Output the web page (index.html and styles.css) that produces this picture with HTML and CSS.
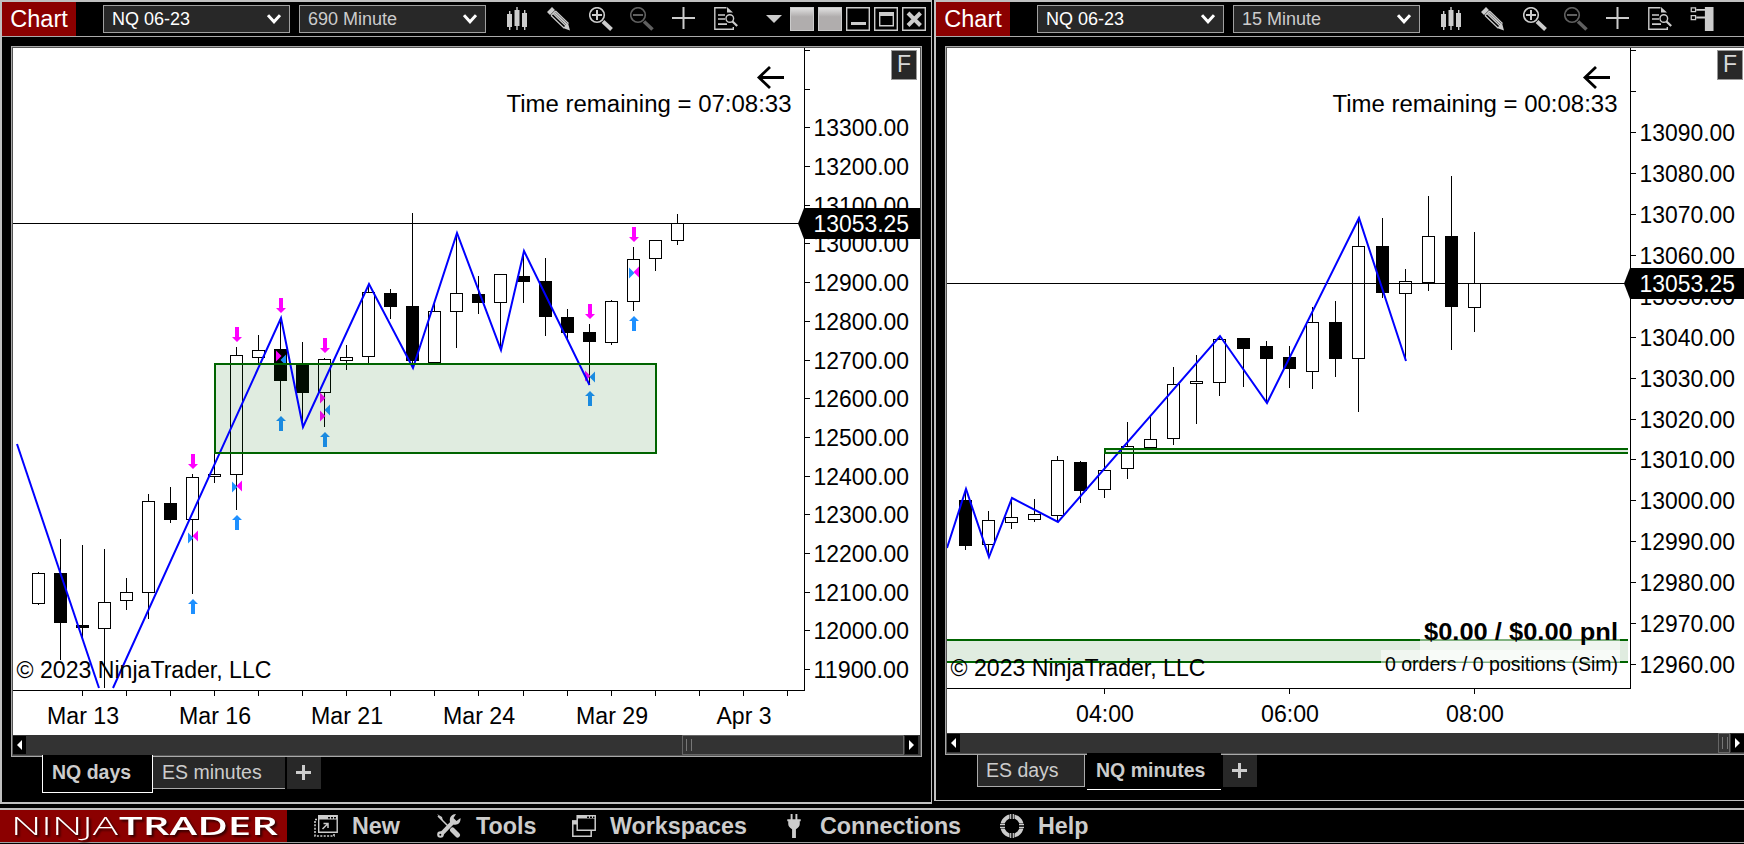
FILE: index.html
```html
<!DOCTYPE html>
<html lang="en">
<head>
  <meta charset="UTF-8" />
  <title>NinjaTrader</title>
  <link rel="stylesheet" href="styles.css">
</head>
<body>

<!-- icon sprite -->
<svg class="sprite">
  <symbol id="i-bars" viewBox="0 0 24 24">
    <path fill="currentColor" d="M2 7h5v13H2zM9.500 3h5v16h-5zM17 6h5v14h-5zM4 4h1.400v19H4zM11.300 0h1.400v23h-1.400zM19 3h1.400v20H19z"/>
  </symbol>
  <symbol id="i-pencil" viewBox="0 0 24 24">
    <path fill="currentColor" d="M0 5l5-5 3 3-5 5zM23 23.500l-7-2.500 5-5z"/>
    <path fill="none" stroke="currentColor" stroke-width="1.200" d="M4 8.500l13 12.500M6 6.500l13 12.500M8.500 4l13 12.500M4 8.500L8.500 4"/>
    <path stroke="currentColor" stroke-width="1.800" d="M7.300 5.300l13 12.500"/>
  </symbol>
  <symbol id="i-zoom-in" viewBox="0 0 24 24">
    <circle cx="8" cy="8" r="7.300" fill="none" stroke="currentColor" stroke-width="1.600"/>
    <path stroke="currentColor" stroke-width="2" d="M3 8h10M8 3v10"/>
    <path stroke="currentColor" stroke-width="4" d="M14 14.500l8.500 8"/>
  </symbol>
  <symbol id="i-zoom-out" viewBox="0 0 24 24">
    <circle cx="8" cy="8" r="7.300" fill="none" stroke="currentColor" stroke-width="1.600"/>
    <path stroke="currentColor" stroke-width="2" d="M3 8h10"/>
    <path stroke="currentColor" stroke-width="3.600" d="M14 14.500l8.500 8"/>
  </symbol>
  <symbol id="i-cross" viewBox="0 0 24 24">
    <path fill="currentColor" d="M0 10h23v2H0zM10.500 -1h2v23h-2z"/>
  </symbol>
  <symbol id="i-doc" viewBox="0 0 24 24">
    <path fill="none" stroke="currentColor" stroke-width="1.400" d="M12.500 .7H.8v21.600h18.500V20"/>
    <path fill="currentColor" d="M13 0l6 5.500h-6zM4 7.200h7v1.600H4zM4 11.200h7v1.600H4zM4 16.200h9v1.700H4z"/>
    <circle cx="15.800" cy="11.500" r="3.800" fill="none" stroke="currentColor" stroke-width="1.400"/>
    <path stroke="currentColor" stroke-width="2.200" d="M18.500 14.500l4.700 4.500"/>
  </symbol>
  <symbol id="i-props" viewBox="0 0 24 25">
    <path fill="currentColor" d="M15 0h9v25h-9zM6 2h9v2H6zM6 10h9v2H6z"/>
    <path fill="none" stroke="currentColor" stroke-width="1.300" d="M.8 .8h4.500v4H.8zM.8 9h4.500v4.200H.8z"/>
  </symbol>
  <symbol id="i-chevron" viewBox="0 0 14 10">
    <path fill="none" stroke="#fff" stroke-width="3" d="M1 1.200l6 6.600 6-6.600"/>
  </symbol>
  <symbol id="i-new" viewBox="0 0 24 22">
    <path fill="none" stroke="currentColor" stroke-width="1.400" d="M4.700 .7h18.500v16.600H4.700z"/>
    <path fill="currentColor" d="M5 1h18v3.500H5z"/>
    <path fill="#000" d="M14 2h2v1.500h-2zM17 2h2v1.500h-2zM20 2h2v1.500h-2z"/>
    <path fill="none" stroke="currentColor" stroke-width="1.500" d="M8.500 14l5-5M9.500 8.500h4.500v4.500"/>
    <path fill="none" stroke="currentColor" stroke-width="1.600" stroke-dasharray="2 1.400" d="M3 4.500H1v16.500h19v-3"/>
  </symbol>
  <symbol id="i-tools" viewBox="0 0 24 24">
    <path stroke="currentColor" stroke-width="1.500" d="M1 2l10 10"/>
    <path stroke="currentColor" stroke-width="5" stroke-linecap="round" d="M15.500 16l5 5"/>
    <path stroke="currentColor" stroke-width="4" d="M3 21.500L17 7"/>
    <path fill="currentColor" d="M0 0l5 3 1 4zM13 8c-1-5 2-8 6-8l-2.500 4 3 3L23.500 4c.5 5-3 7.500-7 6.500z"/>
    <circle cx="3.500" cy="20.500" r="3.300" fill="currentColor"/>
    <circle cx="3.300" cy="20.700" r="1" fill="#000"/>
  </symbol>
  <symbol id="i-windows" viewBox="0 0 24 22">
    <path fill="none" stroke="currentColor" stroke-width="1.500" d="M5.200 .8h18v14.500h-18zM4.500 6H.8v15.200h18.400V16"/>
    <path fill="currentColor" d="M5 .5h18.500v3H5zM0 5.500h5v4H0z"/>
    <path fill="#000" d="M15 1.500h2V3h-2zM18 1.500h2V3h-2zM21 1.500h1.500V3H21z"/>
  </symbol>
  <symbol id="i-plug" viewBox="0 0 16 25">
    <path fill="currentColor" d="M4.500 0h2v6h-2zM9.500 0h2v6h-2zM1 5.500h14v2H1zM2 7.500h12v3q0 3-4 5.500v9H6v-9q-4-2.500-4-5.500z"/>
  </symbol>
  <symbol id="i-help" viewBox="0 0 24 24">
    <circle cx="12" cy="12" r="9.700" fill="none" stroke="currentColor" stroke-width="4"/>
    <path stroke="#000" stroke-width="5" d="M12 0v5M12 19v5M0 12h5M19 12h5"/>
    <path stroke="currentColor" stroke-width="1.200" d="M10.700 0v5M13.300 0v5M10.700 19v5M13.300 19v5M0 10.700h5M0 13.300h5M19 10.700h5M19 13.300h5"/>
  </symbol>
</svg>

<div class="windows">
  <section class="window">
    <header class="title-bar">
      <span class="title">Chart</span>
      <button class="combo instrument">NQ 06-23<svg><use href="#i-chevron"/></svg></button>
      <button class="combo interval">690 Minute<svg><use href="#i-chevron"/></svg></button>
      <div class="tools">
        <svg><use href="#i-bars"/></svg>
        <svg><use href="#i-pencil"/></svg>
        <svg><use href="#i-zoom-in"/></svg>
        <svg class="dim"><use href="#i-zoom-out"/></svg>
        <svg><use href="#i-cross"/></svg>
        <svg><use href="#i-doc"/></svg>
      </div>
      <div class="win-buttons">
        <span class="drop"></span>
        <span class="link"></span>
        <span class="link"></span>
        <svg viewBox="0 0 24 24"><path fill="none" stroke="#ccc" stroke-width="1.400" d="M.7 .7h22.600v22.600H.7z"/><path fill="#ccc" d="M5 15h15v3H5z"/></svg>
        <svg viewBox="0 0 24 24"><path fill="none" stroke="#ccc" stroke-width="1.400" d="M.7 .7h22.600v22.600H.7zM5.700 6h13.600v12.800H5.700z"/><path fill="#ccc" d="M5 5h15v4H5z"/></svg>
        <svg viewBox="0 0 24 24"><path fill="none" stroke="#ccc" stroke-width="1.400" d="M.7 .7h22.600v22.600H.7z"/><path stroke="#ccc" stroke-width="4" d="M6 6l12.500 12.500M18.500 6L6 18.500"/></svg>
      </div>
    </header>
    <div class="panel">
      <svg class="chart" id="chart-days" viewBox="13 48 907 687"></svg>
      <button class="fixed-scale">F</button>
      <div class="scrollbar">
        <i class="arrow left"></i>
        <i class="thumb"></i>
        <i class="arrow right"></i>
      </div>
    </div>
    <nav class="tabs">
      <span class="tab active">NQ days</span>
      <span class="tab">ES minutes</span>
      <span class="tab add"></span>
    </nav>
  </section>

  <section class="window second">
    <header class="title-bar">
      <span class="title">Chart</span>
      <button class="combo instrument">NQ 06-23<svg><use href="#i-chevron"/></svg></button>
      <button class="combo interval">15 Minute<svg><use href="#i-chevron"/></svg></button>
      <div class="tools">
        <svg><use href="#i-bars"/></svg>
        <svg><use href="#i-pencil"/></svg>
        <svg><use href="#i-zoom-in"/></svg>
        <svg class="dim"><use href="#i-zoom-out"/></svg>
        <svg><use href="#i-cross"/></svg>
        <svg><use href="#i-doc"/></svg>
        <svg><use href="#i-props"/></svg>
      </div>
    </header>
    <div class="panel">
      <svg class="chart" id="chart-minutes" viewBox="947 48 797 685"></svg>
      <button class="fixed-scale">F</button>
      <div class="scrollbar">
        <i class="arrow left"></i>
        <i class="thumb"></i>
        <i class="arrow right"></i>
      </div>
    </div>
    <nav class="tabs">
      <span class="tab">ES days</span>
      <span class="tab active">NQ minutes</span>
      <span class="tab add"></span>
    </nav>
  </section>
</div>

<footer class="menu-bar">
  <div class="logo">
    <svg viewBox="0 0 287 32">
      <text class="thin" x="11" y="25" textLength="107" lengthAdjust="spacingAndGlyphs">NINJA</text>
      <text class="bold" x="119" y="25" textLength="159" lengthAdjust="spacingAndGlyphs">TRADER</text>
    </svg>
  </div>
  <a class="item new"><svg><use href="#i-new"/></svg>New</a>
  <a class="item tool"><svg><use href="#i-tools"/></svg>Tools</a>
  <a class="item work"><svg><use href="#i-windows"/></svg>Workspaces</a>
  <a class="item conn"><svg><use href="#i-plug"/></svg>Connections</a>
  <a class="item help"><svg><use href="#i-help"/></svg>Help</a>
</footer>

<script src="chart.js"></script>
</body>
</html>
```
FILE: styles.css
```css
body {
  font-family: "Liberation Sans", Arial, sans-serif;
  margin: 0;
  background-color: #000;
  color: #ccc;
  height: 844px;
  overflow: hidden;
}
button {
  font-family: inherit;
  padding: 0;
}
.sprite {
  display: none;
}
.windows {
  display: flex;
  align-items: flex-start;
  gap: 2px;
  height: 808px;
}
.window {
  box-sizing: border-box;
  width: 932px;
  height: 804px;
  border: 2px solid #c0c0c0;
  border-right-width: 1px;
}
.window.second {
  width: 810px;
  height: 801px;
  border-right: none;
  border-bottom-width: 1px;
}

/* title bar */
.title-bar {
  display: flex;
  align-items: center;
  height: 34px;
  border-bottom: 1px solid #aaa;
}
.title {
  width: 74px;
  height: 34px;
  line-height: 34px;
  font-size: 23.500px;
  text-align: center;
  color: #fff;
  background-color: #8b0000;
}
.combo {
  display: flex;
  align-items: center;
  justify-content: space-between;
  box-sizing: border-box;
  width: 187px;
  height: 28px;
  margin-left: 9px;
  padding: 0 8px;
  border: 1px solid #a0a0a0;
  border-radius: 0;
  background-color: #282828;
  font-size: 18px;
  color: #ccc;
}
.combo.instrument {
  margin-left: 27px;
  color: #fff;
}
.combo svg {
  width: 14px;
  height: 10px;
}
.tools {
  display: flex;
  gap: 17.750px;
  margin-left: 19px;
  color: #ccc;
}
.tools svg {
  width: 24px;
  height: 24px;
  overflow: visible;
}
.tools .dim {
  color: #606060;
}
.win-buttons {
  display: flex;
  align-items: center;
  gap: 4px;
  margin-left: 28px;
}
.win-buttons svg, .link {
  width: 24px;
  height: 24px;
}
.link {
  box-sizing: border-box;
  border: 1px solid #ccc;
  background: linear-gradient(#e0e0e0, #b0adad 40%);
}
.drop {
  margin-right: 4px;
  border: 8px solid transparent;
  border-top-color: #ccc;
  border-bottom: none;
}

/* chart panel */
.panel {
  position: relative;
  margin: 9px 9px 0;
  border: 1px solid #a8a8a8;
  box-shadow: inset 0 0 0 1px #555;
  padding: 1px;
  background-color: #000;
}
.second .panel {
  margin-right: 0;
  border-right: none;
  padding-right: 0;
}
.chart {
  display: block;
  width: 100%;
  height: 687px;
  background-color: #fff;
}
.second .chart {
  height: 685px;
}
.fixed-scale {
  position: absolute;
  top: 3px;
  right: 4px;
  width: 26px;
  height: 30px;
  padding-bottom: 3px;
  border: 1px solid #999;
  background-color: #282828;
  font-size: 23px;
  line-height: 24px;
  color: #d8d8d8;
}
.second .fixed-scale {
  right: 1px;
}
.chart text {
  font-size: 23px;
  fill: #000;
}
.chart .orders {
  font-size: 19.500px;
}
.chart .pnl {
  font-size: 24px;
  font-weight: bold;
}
.chart .tag text {
  fill: #fff;
}
.axis, .candles {
  shape-rendering: crispEdges;
}
.zigzag {
  fill: none;
  stroke: #0000ff;
  stroke-width: 2;
}
.zone {
  fill: rgba(0, 100, 0, 0.12);
}
.zone-line {
  fill: none;
  stroke: #006400;
  stroke-width: 2;
}
.sell {
  fill: #ff00ff;
}
.buy {
  fill: #1e90ff;
}
.scrollbar {
  display: flex;
  align-items: center;
  height: 20px;
  background-color: #333;
}
.scrollbar .arrow {
  display: flex;
  align-items: center;
  justify-content: center;
  width: 13px;
  height: 18px;
  background-color: #000;
}
.arrow::before {
  content: "";
  border: 5px solid transparent;
}
.arrow.left::before {
  border-right-color: #fff;
  border-left: none;
}
.arrow.right::before {
  border-left-color: #fff;
  border-right: none;
}
.thumb {
  box-sizing: border-box;
  width: 222px;
  height: 20px;
  margin-left: auto;
  margin-right: 1px;
  padding: 3px;
  border: 1px solid #666;
}
.window:not(.second) .arrow.right {
  margin-right: 2px;
}
.thumb::before {
  content: "";
  display: block;
  width: 4px;
  height: 12px;
  border: 1px solid #777;
  border-top: none;
  border-bottom: none;
}
.second .thumb {
  width: 12px;
}

/* tabs */
.tabs {
  position: relative;
  display: flex;
  align-items: flex-start;
  margin: -1px 0 0 40px;
}
.second .tabs {
  margin: -1px 0 0 41px;
}
.tab {
  box-sizing: border-box;
  width: 132px;
  height: 33px;
  padding-left: 9px;
  border: 1px solid #aaa;
  border-left: none;
  border-right: none;
  background-color: #282828;
  font-size: 19.500px;
  line-height: 31px;
}
.tab.active {
  width: 111px;
  height: 38px;
  margin-top: -1px;
  padding-left: 9px;
  border: 1px solid #fff;
  border-top: none;
  background-color: #000;
  font-weight: bold;
  line-height: 35px;
}
.tab.add {
  width: 34px;
  margin-left: 2px;
  padding: 0;
  border-bottom: none;
  background: linear-gradient(#ccc, #ccc) 9px 14px / 15px 3px no-repeat,
    linear-gradient(#ccc, #ccc) 15px 8px / 3px 15px no-repeat, #282828;
}
.second .tab:first-child {
  width: 108px;
  margin-right: 2px;
  padding-left: 8px;
  border: 1px solid #aaa;
}
.second .tab.active {
  width: 134px;
  height: 37px;
  border-left: none;
  border-right: none;
}

/* bottom menu */
.menu-bar {
  display: flex;
  align-items: center;
  height: 32px;
  border-top: 2px solid #c0c0c0;
  border-bottom: 1px solid #a0a0a0;
}
.logo {
  width: 287px;
  height: 32px;
  margin-right: 27px;
  background-color: #8b0000;
}
.logo svg {
  display: block;
  width: 287px;
  height: 32px;
  overflow: visible;
  filter: drop-shadow(2px 2px 1px #300);
}
.logo text {
  font-family: "Open Sans", sans-serif;
  font-size: 25.500px;
  fill: #fff;
}
.logo .thin {
  font-weight: 300;
}
.logo .bold {
  font-weight: 600;
}
.item {
  display: flex;
  align-items: center;
  gap: 14px;
  font-size: 23.300px;
  line-height: 32px;
  font-weight: bold;
}
.item svg {
  width: 24px;
  height: 24px;
}
.item.new {
  width: 123px;
}
.item.tool {
  width: 135px;
  gap: 15px;
}
.item.work, .item.conn {
  width: 214px;
}
.item.conn {
  gap: 18px;
}
.item.conn svg {
  width: 16px;
}
```
FILE: chart.js
```js
const NS = 'http://www.w3.org/2000/svg';

function add(parent, name, attrs, text) {
  const node = document.createElementNS(NS, name);
  for (const key in attrs) node.setAttribute(key, attrs[key]);
  if (text) node.textContent = text;
  parent.appendChild(node);
  return node;
}

function label(parent, x, y, text, width, anchor, cls) {
  const attrs = { x: x, y: y, textLength: width, lengthAdjust: 'spacingAndGlyphs' };
  if (anchor) attrs['text-anchor'] = anchor;
  if (cls) attrs.class = cls;
  add(parent, 'text', attrs, text);
}

// candle: [x, high, body top, body bottom, low, filled]
function drawCandles(svg, candles) {
  const g = add(svg, 'g', { class: 'candles' });
  candles.forEach(([x, high, top, bottom, low, filled]) => {
    add(g, 'rect', { x: x, y: high, width: 1, height: low - high });
    if (filled) {
      add(g, 'rect', { x: x - 6, y: top, width: 13, height: bottom - top });
    } else {
      add(g, 'rect', { x: x - 5.5, y: top + 0.5, width: 12, height: bottom - top - 1, fill: '#fff', stroke: '#000' });
    }
  });
}

function drawAxis(svg, c) {
  const g = add(svg, 'g', { class: 'axis' });
  add(g, 'rect', { x: c.axisX, y: 48, width: 1, height: c.axisY - 47 });
  add(g, 'rect', { x: c.left, y: c.axisY, width: c.axisX - c.left, height: 1 });
  c.ticks.forEach(y => add(g, 'rect', { x: c.axisX, y: Math.floor(y), width: 6, height: 1 }));
  c.timeTicks.forEach(x => add(g, 'rect', { x: x, y: c.axisY, width: 1, height: 6 }));
  c.prices.forEach(([price, y]) => label(svg, c.axisX + 9.5, y + 8.5, price + '.00', 95.5));
  c.times.forEach(([text, x, w]) => label(svg, x, c.axisY + 34, text, w, 'middle'));
}

function drawOverlay(svg, c) {
  const x = c.axisX;
  const y = c.lastY;
  const tag = add(svg, 'g', { class: 'tag' });
  add(tag, 'path', { d: `M${x - 6} ${y}L${x} ${y - 15.5}H1744V${y + 15.5}H${x}z` });
  label(tag, x + 9.5, y + 8.5, '13053.25', 95.5);
  label(svg, c.left + 3.5, c.axisY - 12.5, '© 2023 NinjaTrader, LLC', 255);
  label(svg, x - 12.5, 111.5, c.remaining, 285, 'end');
  add(svg, 'path', { d: `M${x - 20} 77.5H${x - 45}M${x - 34} 67L${x - 45} 77.5L${x - 34} 88`, fill: 'none', stroke: '#000', 'stroke-width': 2.8 });
}

function arrow(svg, x, y, dir) {
  // stem plus head, 10 wide and 15 tall
  const d = dir === 'down'
    ? `M${x - 2} ${y}h4v10h3l-5 5l-5 -5h3z`
    : `M${x - 2} ${y + 15}h4v-10h3l-5 -5l-5 5h3z`;
  add(svg, 'path', { d: d, class: dir === 'down' ? 'sell' : 'buy' });
}

function wedge(svg, x, y, dir, cls) {
  const w = dir === 'right' ? 5.5 : -5.5;
  add(svg, 'path', { d: `M${x} ${y - 5.5}l${w} 5.500l${-w} 5.500z`, class: cls });
}

function range(from, to, step) {
  const out = [];
  for (let v = from; v <= to; v += step) out.push(v);
  return out;
}

// ---- days chart ----
const days = document.getElementById('chart-days');
const dayY = p => 205.3 + (13100 - p) * 0.3868;
const dayConf = {
  left: 13, axisX: 804, axisY: 690, lastY: 223.5,
  remaining: 'Time remaining = 07:08:33',
  ticks: range(11900, 13500, 100).map(dayY),
  prices: range(11900, 13300, 100).map(p => [p, dayY(p)]),
  timeTicks: range(82, 478, 44).concat(range(523, 787, 44)),
  times: [['Mar 13', 83, 72], ['Mar 16', 215, 72], ['Mar 21', 347, 72], ['Mar 24', 479, 72], ['Mar 29', 612, 72], ['Apr 3', 744, 55]]
};
drawAxis(days, dayConf);
drawCandles(days, [
  [38, 572, 573, 604, 605, 0],
  [60, 539, 573, 623, 660, 1],
  [82, 545, 625, 628, 638, 1],
  [104, 549, 602, 629, 688, 0],
  [126, 578, 592, 601, 610, 0],
  [148, 494, 501, 593, 619, 0],
  [170, 487, 503, 520, 523, 1],
  [192, 474, 477, 520, 594, 0],
  [214, 453, 474, 477, 483, 0],
  [236, 347, 355, 475, 510, 0],
  [258, 335, 350, 358, 363, 0],
  [280, 318, 349, 381, 411, 1],
  [302, 342, 364, 393, 427, 1],
  [324, 358, 359, 393, 427, 0],
  [346, 345, 357, 361, 370, 0],
  [368, 286, 292, 357, 363, 0],
  [390, 289, 293, 307, 319, 1],
  [412, 213, 306, 361, 368, 1],
  [434, 303, 311, 363, 363, 0],
  [456, 233, 293, 312, 348, 0],
  [478, 276, 294, 303, 314, 1],
  [500, 274, 274, 303, 349, 0],
  [523, 252, 276, 282, 303, 1],
  [545, 258, 281, 317, 336, 1],
  [567, 309, 317, 333, 339, 1],
  [589, 324, 332, 342, 385, 1],
  [611, 300, 301, 343, 345, 0],
  [633, 247, 259, 302, 311, 0],
  [655, 240, 240, 259, 271, 0],
  [677, 214, 223, 241, 245, 0]
]);
add(days, 'rect', { x: 13, y: 223, width: 791, height: 1 });
[[193, 454], [237, 327], [281, 298], [325, 338], [590, 304], [634, 227]].forEach(([x, y]) => arrow(days, x, y, 'down'));
[[193, 599], [237, 515], [281, 416], [325, 432], [590, 391], [634, 316]].forEach(([x, y]) => arrow(days, x, y, 'up'));
[
  [188, 538, 'right', 'buy'], [198, 536, 'left', 'sell'],
  [232, 487, 'right', 'buy'], [242, 486, 'left', 'sell'],
  [276, 356, 'right', 'sell'], [286, 360, 'left', 'buy'],
  [320, 398, 'right', 'sell'], [320, 416, 'right', 'sell'], [330, 410, 'left', 'buy'],
  [585, 376, 'right', 'sell'], [595, 377, 'left', 'buy'],
  [629, 273, 'right', 'buy'], [639, 272, 'left', 'sell']
].forEach(w => wedge(days, ...w));
add(days, 'rect', { x: 215, y: 364, width: 441, height: 89, class: 'zone' });
add(days, 'polyline', { points: '17,444 99,688', class: 'zigzag' });
add(days, 'polyline', { points: '113,688 281,318 303,427 369,284 413,368 457,233 501,350 524,251 589.5,385', class: 'zigzag' });
add(days, 'rect', { x: 215, y: 364, width: 441, height: 89, class: 'zone-line' });
drawOverlay(days, dayConf);

// ---- minutes chart ----
const minutes = document.getElementById('chart-minutes');
const minY = p => 173.5 + (13080 - p) * 4.092;
const minConf = {
  left: 947, axisX: 1630, axisY: 688, lastY: 283.5,
  remaining: 'Time remaining = 00:08:33',
  ticks: range(12960, 13110, 10).map(minY),
  prices: range(12960, 13090, 10).map(p => [p, minY(p)]),
  timeTicks: [1104, 1289, 1474],
  times: [['04:00', 1105, 58], ['06:00', 1290, 58], ['08:00', 1475, 58]]
};
drawAxis(minutes, minConf);
drawCandles(minutes, [
  [965, 491, 500, 546, 550, 1],
  [988, 511, 520, 545, 555, 0],
  [1011, 498, 517, 523, 529, 0],
  [1034, 499, 514, 520, 522, 0],
  [1057, 456, 460, 516, 521, 0],
  [1080, 461, 462, 491, 503, 1],
  [1104, 453, 470, 490, 498, 0],
  [1127, 422, 446, 469, 479, 0],
  [1150, 416, 439, 448, 448, 0],
  [1173, 367, 384, 439, 445, 0],
  [1196, 355, 381, 384, 424, 0],
  [1219, 338, 339, 383, 396, 0],
  [1243, 338, 338, 349, 387, 1],
  [1266, 341, 346, 359, 402, 1],
  [1289, 346, 357, 369, 388, 1],
  [1312, 307, 322, 372, 389, 0],
  [1335, 301, 322, 359, 377, 1],
  [1358, 218, 246, 359, 412, 0],
  [1382, 218, 246, 293, 298, 1],
  [1405, 269, 281, 294, 360, 0],
  [1428, 196, 236, 283, 291, 0],
  [1451, 176, 236, 307, 350, 1],
  [1474, 232, 283, 308, 332, 0]
]);
add(minutes, 'rect', { x: 947, y: 283, width: 683, height: 1 });
add(minutes, 'rect', { x: 1105, y: 449, width: 523, height: 4, class: 'zone' });
add(minutes, 'rect', { x: 947, y: 640, width: 681, height: 22, class: 'zone' });
add(minutes, 'polyline', { points: '947,548 966,489 989,557 1012,498 1058,522 1220,336 1267,403 1359,218 1406,361', class: 'zigzag' });
add(minutes, 'path', { d: 'M1628 449H1105V453H1628M947 640H1628M947 662H1628', class: 'zone-line' });
add(minutes, 'rect', { x: 1420, y: 616, width: 200, height: 46, fill: '#fff', 'fill-opacity': 0.5 });
add(minutes, 'rect', { x: 1381, y: 650, width: 239, height: 26, fill: '#fff', 'fill-opacity': 0.5 });
label(minutes, 1618, 639.5, '$0.00 / $0.00 pnl', 194, 'end', 'pnl');
label(minutes, 1618, 671, '0 orders / 0 positions (Sim)', 233, 'end', 'orders');
drawOverlay(minutes, minConf);
```
